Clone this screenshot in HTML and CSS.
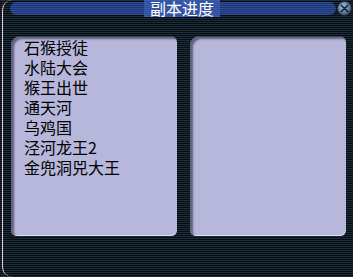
FILE: index.html
```html
<!DOCTYPE html>
<html lang="zh">
<head>
<meta charset="utf-8">
<title>副本进度</title>
<link rel="stylesheet" href="styles.css">
</head>
<body>
<div class="window">
  <div class="frame">
    <div class="titlebar">
      <div class="bar">
        <div class="title">副本进度</div>
      </div>
      <button class="close" aria-label="关闭">
        <svg width="15" height="15" viewBox="0 0 15 15">
          <defs>
            <radialGradient id="cg" cx="0.4" cy="0.35" r="0.7">
              <stop offset="0" stop-color="#a8bcd0"/>
              <stop offset="0.6" stop-color="#6282a2"/>
              <stop offset="1" stop-color="#2c4460"/>
            </radialGradient>
          </defs>
          <circle cx="7.5" cy="7.5" r="7" fill="url(#cg)" stroke="#1a2838" stroke-width="1"/>
          <path d="M4.2 4.2 L10.8 10.8 M10.8 4.2 L4.2 10.8" stroke="#16222e" stroke-width="1.6" stroke-linecap="round"/>
        </svg>
      </button>
    </div>
    <div class="panes">
      <div class="pane pane-left">
        <ul class="list">
          <li>石猴授徒</li>
          <li>水陆大会</li>
          <li>猴王出世</li>
          <li>通天河</li>
          <li>乌鸡国</li>
          <li>泾河龙王2</li>
          <li>金兜洞兕大王</li>
        </ul>
      </div>
      <div class="pane pane-right"></div>
    </div>
  </div>
</div>
</body>
</html>
```

FILE: styles.css
```css
html, body {
  margin: 0;
  padding: 0;
}

body {
  width: 353px;
  height: 277px;
  overflow: hidden;
  background: repeating-linear-gradient(to bottom, #1c2f3d 0 1px, #060b10 1px 2px);
  font-family: "Noto Sans CJK SC", "Noto Sans", sans-serif;
}

.window {
  height: 277px;
  border-left: 2px solid transparent;
  background: repeating-linear-gradient(to bottom, #4a2c34 0 1px, #120a0e 1px 2px) left / 2px 100% no-repeat;
}

.frame {
  height: 277px;
  box-sizing: border-box;
  border-left: 1px solid #d4d4e0;
  border-top-left-radius: 10px;
  border-bottom-left-radius: 10px;
  display: flex;
  flex-direction: column;
}

.titlebar {
  height: 17px;
  display: flex;
  align-items: center;
  padding-left: 7px;
}

.bar {
  flex: 1;
  height: 13px;
  border-radius: 7px;
  background: repeating-linear-gradient(to bottom, #2c4c96 0 1px, #1e3676 1px 2px);
  display: flex;
  align-items: center;
  justify-content: center;
  padding-left: 18px;
}

.title {
  height: 17px;
  line-height: 17px;
  padding: 0 6px;
  color: #ffffff;
  font-size: 16px;
  background: repeating-linear-gradient(to bottom, #3b5cac 0 1px, #30509e 1px 2px);
}

.close {
  width: 15px;
  height: 15px;
  margin: 0 1px;
  padding: 0;
  border: 0;
  background: none;
  display: block;
}

.close svg {
  display: block;
}

.panes {
  margin-top: 19px;
  display: flex;
  gap: 13px;
  padding-left: 8px;
  padding-right: 7px;
}

.pane {
  height: 200px;
  box-sizing: border-box;
  background: #b7b7db;
  border-top: 1px solid #46465a;
  border-radius: 9px 6px 6px 6px;
  box-shadow: inset 3px 2px 2px rgba(50, 50, 72, 0.65), inset 0 -1px 0 #dcdcf2;
}

.pane-left {
  width: 166px;
}

.pane-right {
  flex: 1;
}

.list {
  list-style: none;
  margin: 0;
  padding: 0 0 0 13px;
  font-size: 16px;
  line-height: 20px;
  color: #000000;
}
```
